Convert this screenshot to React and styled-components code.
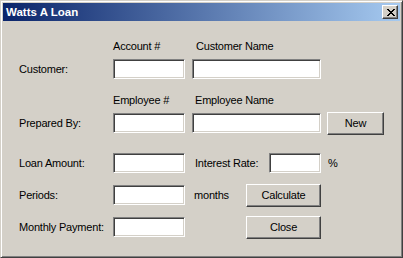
import React from "react";
import styled, { createGlobalStyle } from "styled-components";

let GlobalStyle = createGlobalStyle`
  html, body {
    margin: 0;
    padding: 0;
    background: #d4d0c8;
  }
  body {
    font-family: "Liberation Sans", Arial, sans-serif;
  }
`;

function CloseGlyph() {
  // 8x7 pixel cross, like the classic caption button
  let rows = ["XX....XX", ".XX..XX.", "..XXXX..", "...XX...", "..XXXX..", ".XX..XX.", "XX....XX"];
  let rects = [];
  rows.forEach((row, y) => {
    row.split("").forEach((c, x) => {
      if (c === "X") rects.push(<rect key={x + "-" + y} x={x} y={y} width="1" height="1" />);
    });
  });
  return (
    <svg width="8" height="7" viewBox="0 0 8 7" shapeRendering="crispEdges" fill="#000">
      {rects}
    </svg>
  );
}

function App() {
  return (
    <>
      <GlobalStyle />
      <Window>
        <TitleBar>
          <Title>Watts A Loan</Title>
          <CaptionButton aria-label="Close">
            <CloseGlyph />
          </CaptionButton>
        </TitleBar>
        <Form>
          <Row $top={19} $height={13}>
            <span />
            <Label>Account #</Label>
            <Cell $pad={4}>
              <Label>Customer Name</Label>
            </Cell>
          </Row>
          <Row $top={4}>
            <Label>Customer:</Label>
            <TextBox />
            <TextBox />
          </Row>

          <Row $top={13} $height={13}>
            <span />
            <Label>Employee #</Label>
            <Cell $pad={3}>
              <Label>Employee Name</Label>
            </Cell>
          </Row>
          <Row $top={4}>
            <Label>Prepared By:</Label>
            <TextBox />
            <TextBox />
            <Button $width={57}>New</Button>
          </Row>

          <Row $top={16}>
            <Label>Loan Amount:</Label>
            <TextBox />
            <Cell $pad={3}>
              <Label>Interest Rate:</Label>
              <TextBox $width={52} />
            </Cell>
            <Cell $pad={1}>
              <Label>%</Label>
            </Cell>
          </Row>
          <Row $top={8}>
            <Label>Periods:</Label>
            <TextBox />
            <Cell $pad={2}>
              <Label>months</Label>
              <Button $width={75}>Calculate</Button>
            </Cell>
          </Row>
          <Row $top={8}>
            <Label>Monthly Payment:</Label>
            <TextBox />
            <Cell>
              <span />
              <Button $width={75}>Close</Button>
            </Cell>
          </Row>
        </Form>
      </Window>
    </>
  );
}

let Window = styled.div`
  box-sizing: border-box;
  width: 403px;
  height: 258px;
  padding: 1px;
  background: #d4d0c8;
  border: 1px solid;
  border-color: #d4d0c8 #404040 #404040 #d4d0c8;
  box-shadow: inset 1px 1px #ffffff, inset -1px -1px #808080;
  display: flex;
  flex-direction: column;
  & > * {
    margin-left: 1px;
    margin-right: 1px;
  }
  & > *:first-child {
    margin-top: 1px;
  }
`;

let TitleBar = styled.div`
  height: 18px;
  display: flex;
  align-items: center;
  padding: 0 2px 0 3px;
  background: linear-gradient(to right, #0a246a, #a6caf0);
`;

let Title = styled.span`
  flex: 1;
  color: #fff;
  font-weight: bold;
  font-size: 11.5px;
  line-height: 18px;
  white-space: nowrap;
`;

let CaptionButton = styled.button`
  box-sizing: border-box;
  width: 16px;
  height: 14px;
  margin: 0;
  padding: 0 0 0 1px;
  display: flex;
  align-items: center;
  justify-content: center;
  background: #d4d0c8;
  border: 1px solid;
  border-color: #fff #404040 #404040 #fff;
  box-shadow: inset -1px -1px #808080;
`;

let Form = styled.div`
  display: flex;
  flex-direction: column;
  padding-left: 16px;
`;

let Row = styled.div`
  display: grid;
  grid-template-columns: 87px 72px 129px 57px;
  column-gap: 7px;
  height: ${(p) => p.$height || 24}px;
  margin-top: ${(p) => p.$top}px;
  align-items: center;
  & > :nth-child(4) {
    margin-left: -1px;
  }
`;

let Cell = styled.div`
  display: flex;
  align-items: center;
  justify-content: space-between;
  padding-left: ${(p) => p.$pad || 0}px;
  height: 100%;
`;

let Label = styled.span`
  font-size: 11px;
  line-height: 13px;
  letter-spacing: -0.2px;
  color: #000;
  white-space: nowrap;
`;

let TextBox = styled.input.attrs({ type: "text" })`
  box-sizing: border-box;
  width: ${(p) => (p.$width ? p.$width + "px" : "100%")};
  height: 20px;
  margin: 0;
  padding: 2px 3px;
  background: #fff;
  border: 1px solid;
  border-color: #808080 #fff #fff #808080;
  box-shadow: inset 1px 1px #404040, inset -1px -1px #d4d0c8;
  outline: none;
  font-family: inherit;
  font-size: 11px;
`;

let Button = styled.button`
  box-sizing: border-box;
  width: ${(p) => p.$width}px;
  height: 23px;
  margin: 0;
  padding: 0;
  background: #d4d0c8;
  border: 1px solid;
  border-color: #fff #404040 #404040 #fff;
  box-shadow: inset -1px -1px #808080;
  font-family: "Liberation Sans", Arial, sans-serif;
  font-size: 11px;
  letter-spacing: -0.2px;
  color: #000;
`;

export default App;
